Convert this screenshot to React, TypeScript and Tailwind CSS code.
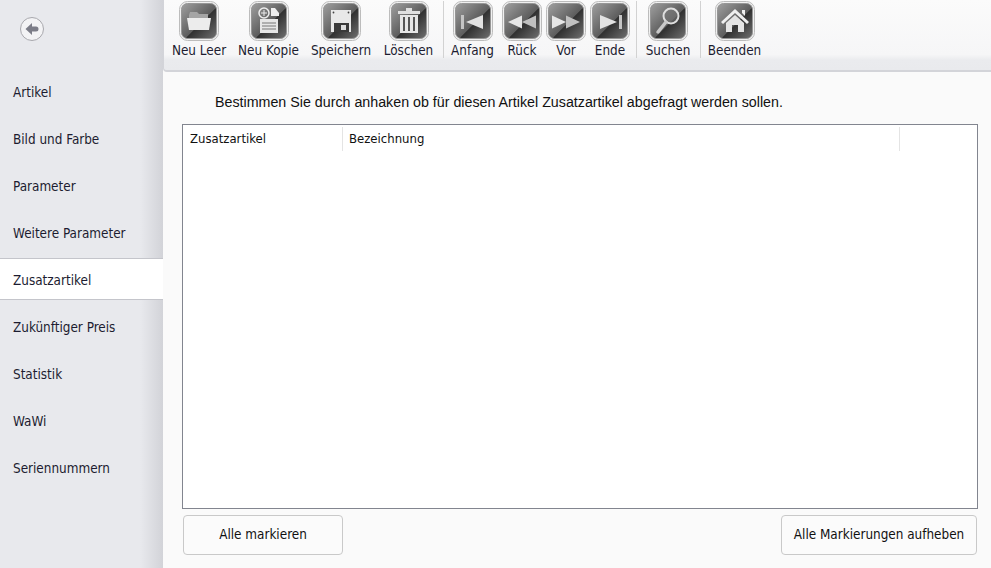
import type { ReactNode } from "react";

const font = "font-['DejaVu_Sans_Condensed','Noto_Sans',sans-serif]";

const navItems = [
  "Artikel",
  "Bild und Farbe",
  "Parameter",
  "Weitere Parameter",
  "Zusatzartikel",
  "Zukünftiger Preis",
  "Statistik",
  "WaWi",
  "Seriennummern",
];

function GlassIcon({ id, children }: { id: string; children: ReactNode }) {
  return (
    <svg width="40" height="40" viewBox="0 0 40 40" className="shrink-0">
      <defs>
        <linearGradient id={`body-${id}`} x1="0" y1="0" x2="1" y2="1">
          <stop offset="0" stopColor="#a0a0a0" />
          <stop offset="0.55" stopColor="#5c5c5c" />
          <stop offset="0.56" stopColor="#303030" />
          <stop offset="1" stopColor="#707070" />
        </linearGradient>
      </defs>
      <rect x="0.5" y="0.5" width="39" height="39" rx="8" fill="#f0f0f0" stroke="#bcbcbc" />
      <rect x="2.5" y="2.5" width="35" height="35" rx="6" fill={`url(#body-${id})`} stroke="#969696" />
      {children}
    </svg>
  );
}

const glyphs: Record<string, ReactNode> = {
  leer: (
    <>
      <path d="M10 14l1-3h7l2 2h9v5H10z" fill="#a5a5a5" />
      <path d="M8 17h24l-2 12H10z" fill="#ececec" />
    </>
  ),
  kopie: (
    <>
      <circle cx="15" cy="12" r="5" fill="none" stroke="#eee" strokeWidth="1.5" />
      <path d="M15 9v6M12 12h6" stroke="#eee" />
      <path d="M22 7h4l4 5v3h-8z" fill="#eee" />
      <path d="M11 18h18v14H11z" fill="#e6e6e6" />
      <path d="M13 22h14M13 25h14M13 28h14" stroke="#777" />
    </>
  ),
  speichern: (
    <>
      <path d="M10 9h20v22H10z" fill="#e8e8e8" />
      <circle cx="12.5" cy="11.5" r="0.9" fill="#444" />
      <circle cx="27.5" cy="11.5" r="0.9" fill="#444" />
      <path d="M13 22h15v9H13z" fill="#3a3a3a" />
      <path d="M20 24h5v5h-5z" fill="#ddd" />
    </>
  ),
  loeschen: (
    <>
      <path d="M9 10h22v3H9zM17 7h6v3h-6z" fill="#e0e0e0" />
      <path d="M11 14h18v18H11z" fill="#e6e6e6" />
      <path d="M15 16v14M20 16v14M25 16v14" stroke="#555" strokeWidth="2" />
    </>
  ),
  anfang: (
    <>
      <path d="M8 14h3v14H8z" fill="#c4c4c4" />
      <path d="M13 21l17-7v14z" fill="#e2e2e2" />
    </>
  ),
  rueck: (
    <>
      <path d="M6 21l14-6.500v13z" fill="#e6e6e6" />
      <path d="M20 21l14-6.500v13z" fill="#c0c0c0" />
    </>
  ),
  vor: (
    <>
      <path d="M6 14.500l14 6.500-14 6.500z" fill="#e6e6e6" />
      <path d="M20 14.500l14 6.500-14 6.500z" fill="#c0c0c0" />
    </>
  ),
  ende: (
    <>
      <path d="M10 14l17 7-17 7z" fill="#e2e2e2" />
      <path d="M29 14h3v14h-3z" fill="#c4c4c4" />
    </>
  ),
  suchen: (
    <>
      <circle cx="23" cy="15" r="7.5" fill="#777" fillOpacity="0.6" stroke="#dedede" strokeWidth="2" />
      <path d="M18 21l-8 10" stroke="#c8c8c8" strokeWidth="3.5" strokeLinecap="round" />
    </>
  ),
  beenden: (
    <>
      <path d="M6 21L20 8l14 13-2 2-12-11L8 23z" fill="#efefef" />
      <path d="M27 9h3v6l-3-3z" fill="#efefef" />
      <path d="M11 22l9-8 9 8v9h-6v-7h-6v7h-6z" fill="#e4e4e4" />
    </>
  ),
};

const toolGroups = [
  [
    { id: "leer", label: "Neu Leer", width: "w-[54px]", ml: "" },
    { id: "kopie", label: "Neu Kopie", width: "w-[61px]", ml: "ml-3" },
    { id: "speichern", label: "Speichern", width: "w-[60px]", ml: "ml-3" },
    { id: "loeschen", label: "Löschen", width: "w-[51px]", ml: "ml-3" },
  ],
  [
    { id: "anfang", label: "Anfang", width: "w-[43px]", ml: "" },
    { id: "rueck", label: "Rück", width: "w-[40px]", ml: "ml-[8px]" },
    { id: "vor", label: "Vor", width: "w-[40px]", ml: "ml-[4px]" },
    { id: "ende", label: "Ende", width: "w-[40px]", ml: "ml-[4px]" },
  ],
  [{ id: "suchen", label: "Suchen", width: "w-[46px]", ml: "ml-px" }],
  [{ id: "beenden", label: "Beenden", width: "w-[53px]", ml: "" }],
];

const groupSpacing = ["mr-[7px] pr-[9px]", "mr-[7px] pr-[6px]", "mr-[7px] pr-[9px]", ""];

function ToolButton({ id, label, width, ml }: { id: string; label: string; width: string; ml: string }) {
  return (
    <button className={`flex flex-col items-center ${width} ${ml}`}>
      <GlassIcon id={id}>{glyphs[id]}</GlassIcon>
      <span className="mt-px whitespace-nowrap text-[13.4px] leading-[18px] text-[#1c1c30]">{label}</span>
    </button>
  );
}

function Toolbar() {
  return (
    <div className="flex h-[72px] items-start rounded-bl border-b-2 border-l border-[#d3d4d9] bg-[linear-gradient(#fbfbfb_0%,#f6f6f7_78%,#eaebee_86%,#e9eaed_100%)] pl-[8px] pt-px">
      {toolGroups.map((group, i) => (
        <div
          key={i}
          className={`flex h-[57px] items-start ${groupSpacing[i]} ${
            i < toolGroups.length - 1 ? "border-r border-[#d2d2d2]" : ""
          }`}
        >
          {group.map((tool) => (
            <ToolButton key={tool.id} {...tool} />
          ))}
        </div>
      ))}
    </div>
  );
}

function Sidebar() {
  return (
    <aside className="flex w-[163px] shrink-0 flex-col bg-[linear-gradient(90deg,#e8e9ed_0%,#e8e9ed_86%,#d2d3d8_100%)]">
      <div className="flex h-[70px] pl-[20px] pt-[17px]">
        <button className="flex h-6 w-6 items-center justify-center rounded-full border border-[#a8a8ad] bg-[#f3f3f5]">
          <svg width="16" height="16" viewBox="0 0 16 16">
            <path d="M1.5 8L8 2v3.5h4a2.5 2.5 0 0 1 0 5H8V14z" fill="#7c7d88" />
          </svg>
        </button>
      </div>
      {navItems.map((item) => (
        <div
          key={item}
          className={`mb-[5px] flex h-[42px] items-center pl-[13px] pt-[4px] text-[13.4px] text-[#1c1c30] ${
            item === "Zusatzartikel" ? "border-y border-[#c4c5cb] bg-white" : ""
          }`}
        >
          {item}
        </div>
      ))}
    </aside>
  );
}

export default function App() {
  return (
    <div className={`flex h-[568px] w-[991px] overflow-hidden bg-[#fafafa] ${font}`}>
      <Sidebar />
      <main className="flex min-w-0 flex-1 flex-col">
        <Toolbar />
        <p className="ml-[52px] mt-[22px] h-[16px] font-['Liberation_Sans',sans-serif] text-[14.25px] leading-[16px] text-[#111]">
          Bestimmen Sie durch anhaken ob für diesen Artikel Zusatzartikel abgefragt werden sollen.
        </p>
        <div className="ml-[19px] mr-[13px] mt-[14px] h-[385px] border border-[#82858f] bg-white pt-[2px]">
          <div className="flex h-[24px] text-[13px] text-[#111]">
            <div className="flex w-[160px] items-center border-r border-[#e4e4e4] pl-[7px]">Zusatzartikel</div>
            <div className="flex w-[557px] items-center border-r border-[#e4e4e4] pl-[6px]">Bezeichnung</div>
          </div>
        </div>
        <div className="ml-[20px] mr-[14px] mt-[6px] flex justify-between text-[13.4px] text-[#111]">
          <button className="h-[40px] w-[160px] rounded border border-[#c9c9c9] bg-[#fbfbfb]">Alle markieren</button>
          <button className="h-[40px] w-[196px] rounded border border-[#c9c9c9] bg-[#fbfbfb]">
            Alle Markierungen aufheben
          </button>
        </div>
      </main>
    </div>
  );
}
